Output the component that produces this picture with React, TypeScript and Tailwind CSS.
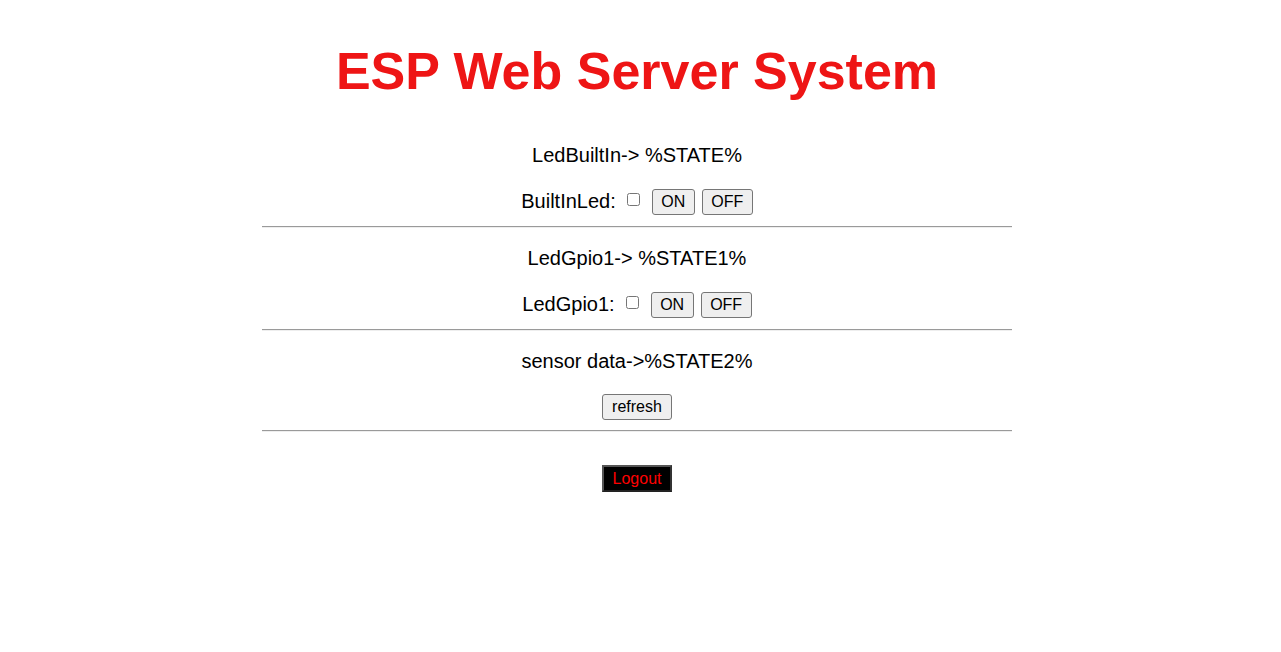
import { useState } from "react";

function Divider() {
  return <div className="w-full border-t border-b border-t-[#9a9a9a] border-b-[#eeeeee]" />;
}

function LedControl({ label, state, top }: { label: string; state: string; top: string }) {
  const [checked, setChecked] = useState(false);
  return (
    <div className={top}>
      <p className="text-center text-[20px] leading-[24px]">{state}</p>
      <div className="mt-[22px] flex h-[26px] items-center justify-center">
        <span className="mb-[3px] text-[20px] leading-[24px]">{label}</span>
        <input
          type="checkbox"
          checked={checked}
          onChange={(e) => setChecked(e.target.checked)}
          className="mb-[6px] ml-[11px] h-[13px] w-[13px]"
        />
        <button
          type="button"
          className="ml-[12px] h-[26px] w-[43px] rounded-[3px] border border-[#767676] bg-[#efefef] text-[16px] leading-[20px]"
        >
          ON
        </button>
        <button
          type="button"
          className="ml-[7px] h-[26px] w-[51px] rounded-[3px] border border-[#767676] bg-[#efefef] text-[16px] leading-[20px]"
        >
          OFF
        </button>
      </div>
      <div className="mt-[11px]">
        <Divider />
      </div>
    </div>
  );
}

export default function App() {
  return (
    <div className="min-h-screen bg-white pr-[7px] font-['Liberation_Sans',Arial,sans-serif] text-black">
      <div className="flex flex-col items-center">
        <h1 className="mt-[41px] text-[52px] font-bold leading-[60px] text-[#ee1515]">ESP Web Server System</h1>
        <div className="w-[750px]">
          <LedControl top="mt-[42px]" state="LedBuiltIn-> %STATE%" label="BuiltInLed:" />
          <LedControl top="mt-[18px]" state="LedGpio1-> %STATE1%" label="LedGpio1:" />
          <div className="mt-[18px]">
            <p className="text-center text-[20px] leading-[24px]">sensor data-&gt;%STATE2%</p>
            <div className="mt-[21px] flex justify-center">
              <button
                type="button"
                className="h-[26px] w-[70px] rounded-[3px] border border-[#767676] bg-[#efefef] text-[16px] leading-[20px]"
              >
                refresh
              </button>
            </div>
            <div className="mt-[10px]">
              <Divider />
            </div>
          </div>
          <div className="mt-[33px] flex justify-center">
            <button
              type="button"
              className="h-[27px] w-[70px] border-2 border-[#555] border-r-[#333] border-b-[#222] bg-black text-[16px] leading-[20px] text-[#ff0000]"
            >
              Logout
            </button>
          </div>
        </div>
      </div>
    </div>
  );
}
